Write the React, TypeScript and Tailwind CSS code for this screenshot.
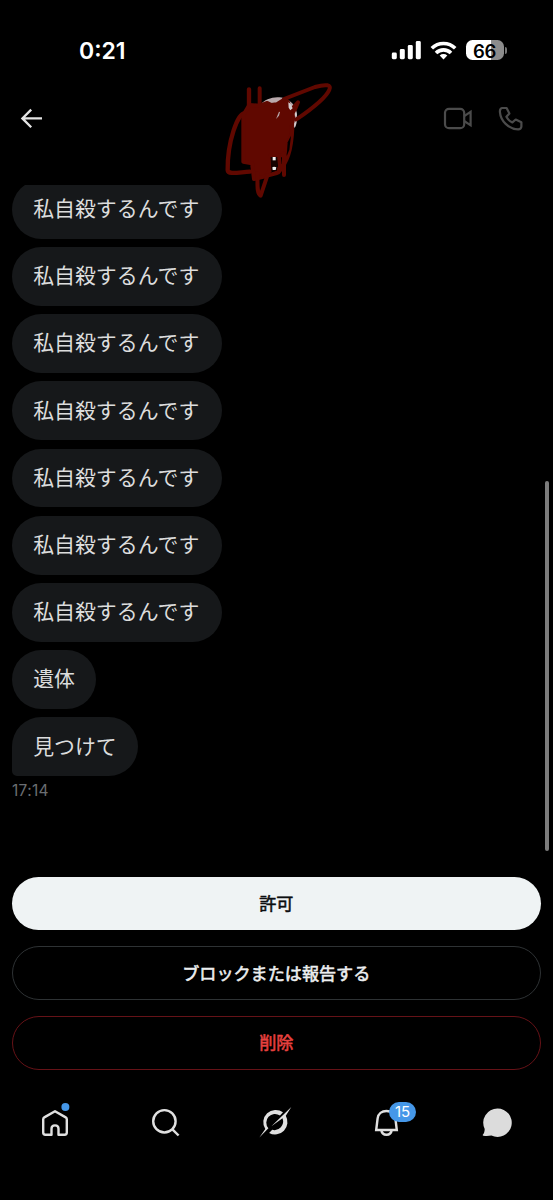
import React from 'react';

const messages = [
  '私自殺するんです',
  '私自殺するんです',
  '私自殺するんです',
  '私自殺するんです',
  '私自殺するんです',
  '私自殺するんです',
  '私自殺するんです',
  '遺体',
  '見つけて',
];

const StatusBar: React.FC = () => (
  <div className="flex h-[76px] items-start justify-between pt-[36px] pr-[46px] pl-[79px] font-['Inter',sans-serif]">
    <span className="text-[23px] leading-[30px] font-semibold text-white">0:21</span>
    <div className="flex h-[28px] items-center">
      <svg width="30" height="28" viewBox="391 36 30 28" fill="#fff">
        <rect x="391.8" y="52.5" width="5" height="6.7" rx="1.4" />
        <rect x="399.8" y="49" width="5" height="10.2" rx="1.4" />
        <rect x="407.8" y="45" width="5" height="14.2" rx="1.4" />
        <rect x="415.8" y="41" width="5" height="18.2" rx="1.4" />
      </svg>
      <svg className="ml-[9px]" width="27" height="28" viewBox="430 36 27 28" fill="none" stroke="#fff" strokeWidth="3.6">
        <path d="M431.8 48.3a16.6 16.6 0 0 1 23.4 0" />
        <path d="M436 53a10.6 10.6 0 0 1 15 0" />
        <path d="M443.5 59.4l-3.8-3.9a5.6 5.6 0 0 1 7.6 0z" fill="#fff" stroke="none" />
      </svg>
      <div className="ml-[9px] flex h-5 w-[38px] items-center justify-center rounded-[6.5px] bg-[linear-gradient(90deg,#fff_66%,#8c8c8c_66%)] pt-px text-[18.5px] leading-5 font-semibold tracking-[-0.3px] text-black">
        66
      </div>
      <div className="ml-[1.5px] h-[7px] w-[2px] rounded-r-full bg-[#777]" />
    </div>
  </div>
);

const Header: React.FC = () => (
  <div className="relative flex h-[109px] items-start justify-between pt-[28px] pr-[29px] pl-[20px]">
    <svg width="24" height="28" viewBox="20 104 24 28" fill="none" stroke="#e4e4e4" strokeWidth="2.3">
      <path d="M42 118.4H22.8M31.2 109.6l-8.8 8.8 8.8 8.8" />
    </svg>
    <div className="flex gap-[25px]">
      <svg width="30" height="28" viewBox="443 104 30 28" fill="none" stroke="#4b4b4b" strokeWidth="2.2">
        <rect x="445" y="108.8" width="19.2" height="19.4" rx="4" />
        <path d="M464.2 116.2l6.4-4.3v13.4l-6.4-4.3" />
      </svg>
      <svg width="26" height="28" viewBox="498 104 26 28" fill="none" stroke="#4b4b4b" strokeWidth="2.2" strokeLinejoin="round">
        <path d="M502 108h4.6l2.8 5.4-3 3.4c1.2 2.4 3.6 4.6 6 5.6l3.3-2.9 5.7 2.7v4.3c0 1.7-1.5 2.9-3.2 2.9-9.7-.5-17.600-8.300-18.300-17.500-.1-2.100.6-3.600 2.100-3.900z" />
      </svg>
    </div>

    {/* avatar covered by a hand drawn scribble */}
    <svg className="absolute top-[-1px] left-[210px] z-10" width="140" height="130" viewBox="0 0 420 390" fill="none">
      <path d="M150 90C172 62 222 58 246 84C262 100 266 132 256 156L236 170L160 150z" fill="#b9a9ac" />
      <g stroke="#600800" strokeWidth="12" strokeLinecap="round" strokeLinejoin="round">
        <path d="M117 43V125L104 115C84 112 52 200 53 285C54 300 85 292 120 290" strokeWidth="13" />
        <path d="M149 40V120M222 72L315 36C350 26 365 30 358 44C348 70 290 112 258 134" strokeWidth="12" />
        <path
          d="M118 90L150 92L172 84L184 90L200 88L226 72L234 82L238 100L248 100L264 82L252 110L246 150L244 178L236 205L222 240L202 242H180V286L166 304L132 312L126 265L100 260V120z"
          fill="#600800"
        />
        <path d="M205 292C232 262 244 225 247 160M222 235V300M206 240L210 275L200 294L172 302L152 362C138 354 144 320 142 294" />
      </g>
      <path d="M198 132l9-22 3 1-3 11z" fill="#b6a5a8" />
      <path d="M243 182l-5 42-8 20 3-42z" fill="#000" />
      <path d="M235 82l7 4 6 14-7 6-5-8zM254 116l4-8 3 12-6 6zM253 145l6-8-1 12-5 6z" fill="#d3cbcd" />
      <path d="M182 246h20l-1 42h-17z" fill="#170200" />
      <rect x="188" y="246" width="9" height="10" fill="#eee" />
      <path d="M187 277l5-2 7 2-2 8h-9z" fill="#eee" />
    </svg>
  </div>
);

const Conversation: React.FC = () => (
  <div className="relative h-[691.5px] overflow-hidden pl-3">
    <div className="-mt-[5.2px] flex flex-col items-start gap-[8.4px]">
      {messages.map((text, i) => (
        <div
          key={i}
          className={`flex h-[58.8px] items-center rounded-[29.4px] bg-[#16181a] pb-[3.5px] pl-[21.2px] text-[20.9px] leading-none whitespace-nowrap text-[#dcdddd] ${
            text.length > 4 ? 'pr-[23px]' : 'pr-[21.2px]'
          } ${i === messages.length - 1 ? 'rounded-bl-[5px]' : ''}`}
        >
          {text}
        </div>
      ))}
    </div>
    <div className="mt-[5px] font-['Inter',sans-serif] text-[15.5px] leading-5 tracking-[0.3px] text-[#6b6e72]">17:14</div>
    <div className="absolute top-[296px] right-[4px] h-[370px] w-[4.5px] rounded-full bg-[#7c7c7c]" />
  </div>
);

const Actions: React.FC = () => (
  <div className="flex flex-col gap-[16px] pr-[12.5px] pl-3 text-[17.1px] leading-none [-webkit-text-stroke:0.55px_currentColor]">
    <button className="h-[53.8px] rounded-full bg-[#eff3f4] pb-[2px] text-[#0c0e10]">許可</button>
    <button className="h-[53.8px] rounded-full border-[1.4px] border-[#2e3234] pb-[2px] text-[#eceeef]">ブロックまたは報告する</button>
    <button className="h-[53.8px] rounded-full border-[1.4px] border-[#661217] pb-[2px] text-[#e8413f]">削除</button>
  </div>
);

const TabBar: React.FC = () => (
  <div className="mt-[30px] grid grid-cols-5 justify-items-center">
    <svg width="40" height="44" viewBox="35.3 1100 40 44" fill="none" stroke="#e0e0e0" strokeWidth="2.4" strokeLinejoin="round">
      <path d="M55.3 1111.2l10.7 6.2c.7.4 1.1 1 1.1 1.8v13.3c0 1.3-.9 2.2-2.2 2.2h-6.1v-6c0-2-1.4-3.3-3.5-3.3s-3.5 1.3-3.5 3.3v6h-6.1c-1.3 0-2.2-.9-2.2-2.2v-13.3c0-.8.4-1.4 1.1-1.8z" />
      <circle cx="65.7" cy="1107" r="4" fill="#4597e8" stroke="none" />
    </svg>
    <svg width="40" height="44" viewBox="145.9 1100 40 44" fill="none" stroke="#e0e0e0" strokeWidth="2.4">
      <circle cx="164.3" cy="1121.3" r="11.2" />
      <path d="M172.3 1129.3l6.2 6.2" />
    </svg>
    <svg width="40" height="44" viewBox="256.5 1100 40 44" fill="#e0e0e0">
      <path d="M283.5 1112.3a12.4 12.4 0 0 0-17.7 16.8l-5.9 8.4 9-9.2a8.7 8.7 0 0 1 11.6-12.8z" />
      <path d="M291.8 1106.9l-19.9 19.3 11.1-7.9a8.7 8.7 0 0 1-10.3 11.5l-3.1 3.1a12.4 12.4 0 0 0 16.7-17.1z" />
    </svg>
    <div className="relative">
      <svg width="40" height="44" viewBox="367 1100 40 44" fill="none" stroke="#e0e0e0" strokeWidth="2.4">
        <path d="M376.2 1130l1.4-11.500c.5-4.600 4.300-7.500 8.900-7.500s8.400 2.900 8.900 7.500l1.400 11.500z" />
        <path d="M381.3 1130c.4 3 2.500 4.700 5.200 4.700s4.800-1.700 5.200-4.700" />
      </svg>
      <span className="absolute top-[2px] left-[22px] flex h-[20.5px] w-[27px] items-center justify-center rounded-full bg-[#4597e8] pb-px font-['Inter',sans-serif] text-[15px] leading-none text-white">
        15
      </span>
    </div>
    <svg width="40" height="44" viewBox="477.7 1100 40 44" fill="#dcdcdc">
      <path d="M497.3 1108.5a14.2 14.2 0 1 1-6.2 27c-2.500.5-5.500.6-8 .2-.8-.1-.9-.8-.4-1.300 1.100-1.200 1.600-2.900 1.700-5.400a14.2 14.2 0 0 1 12.900-20.500z" />
    </svg>
  </div>
);

export default function App() {
  return (
    <div className="h-[1200px] w-[553px] overflow-hidden bg-black font-['Noto_Sans_CJK_JP',sans-serif]">
      <StatusBar />
      <Header />
      <Conversation />
      <Actions />
      <TabBar />
    </div>
  );
}
